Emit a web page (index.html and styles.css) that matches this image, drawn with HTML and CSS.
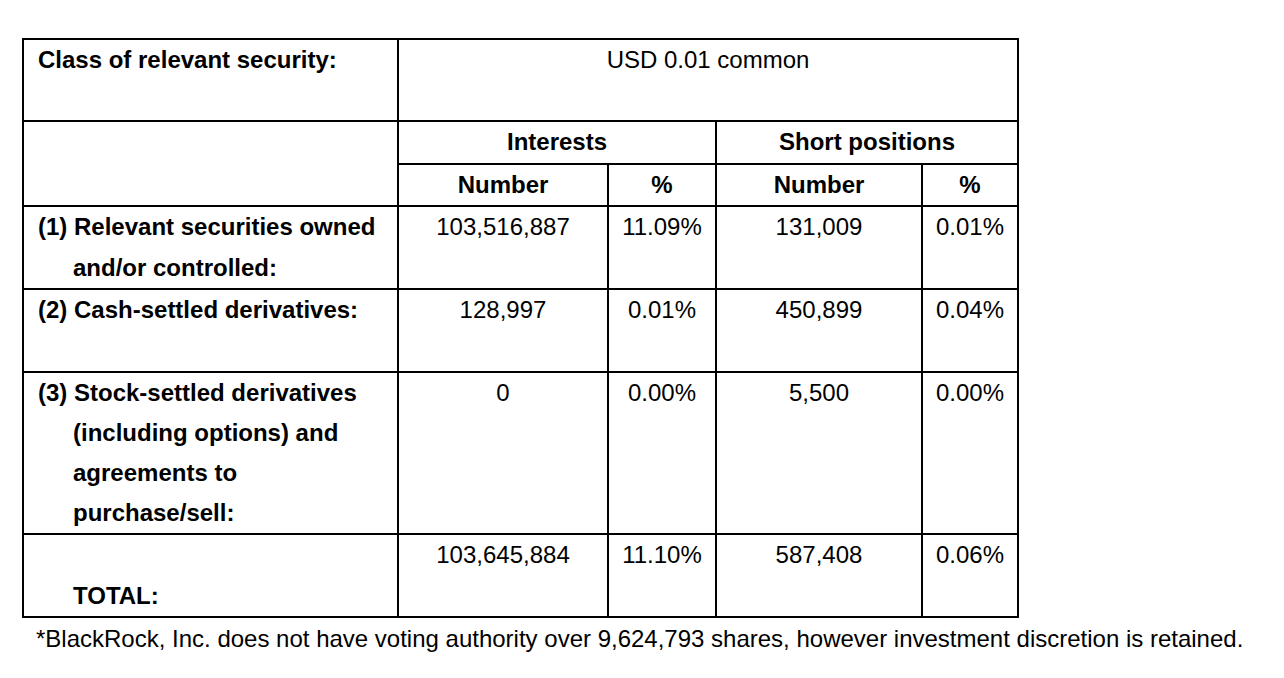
FILE: index.html
```html
<!DOCTYPE html>
<html>
<head>
<meta charset="utf-8">
<link rel="stylesheet" href="styles.css">
</head>
<body>
<table class="disclosure">
  <colgroup>
    <col class="c-label">
    <col class="c-num1">
    <col class="c-pct1">
    <col class="c-num2">
    <col class="c-pct2">
  </colgroup>
  <tr class="r-first">
    <td class="label"><span class="b">Class of relevant security:</span></td>
    <td class="val" colspan="4">USD 0.01 common</td>
  </tr>
  <tr class="r-one">
    <td class="label" rowspan="2"></td>
    <td class="head" colspan="2">Interests</td>
    <td class="head" colspan="2">Short positions</td>
  </tr>
  <tr class="r-one">
    <td class="head">Number</td>
    <td class="head">%</td>
    <td class="head">Number</td>
    <td class="head">%</td>
  </tr>
  <tr class="r-two">
    <td class="label"><div class="hang">(1) Relevant securities owned and/or controlled:</div></td>
    <td class="val">103,516,887</td>
    <td class="val">11.09%</td>
    <td class="val">131,009</td>
    <td class="val">0.01%</td>
  </tr>
  <tr class="r-two">
    <td class="label"><div class="hang">(2) Cash-settled derivatives:</div></td>
    <td class="val">128,997</td>
    <td class="val">0.01%</td>
    <td class="val">450,899</td>
    <td class="val">0.04%</td>
  </tr>
  <tr class="r-four">
    <td class="label"><div class="hang">(3) Stock-settled derivatives (including options) and agreements to purchase/sell:</div></td>
    <td class="val">0</td>
    <td class="val">0.00%</td>
    <td class="val">5,500</td>
    <td class="val">0.00%</td>
  </tr>
  <tr class="r-two">
    <td class="label"><div class="total">TOTAL:</div></td>
    <td class="val">103,645,884</td>
    <td class="val">11.10%</td>
    <td class="val">587,408</td>
    <td class="val">0.06%</td>
  </tr>
</table>
<p class="note">*BlackRock, Inc. does not have voting authority over 9,624,793 shares, however investment discretion is retained.</p>
</body>
</html>
```

FILE: styles.css
```css
html, body {
  margin: 0;
  padding: 0;
  background: #ffffff;
}
body {
  padding: 38px 0 0 22px;
  font-family: "Liberation Sans", Arial, sans-serif;
  font-size: 24px;
  color: #000000;
}
.disclosure {
  border-collapse: collapse;
  table-layout: fixed;
  width: 995px;
  border: 2px solid #000;
}
.c-label { width: 375px; }
.c-num1 { width: 210px; }
.c-pct1 { width: 108px; }
.c-num2 { width: 206px; }
.c-pct2 { width: 96px; }
.disclosure td {
  border: 2px solid #000;
  padding: 0;
  vertical-align: top;
  line-height: 40.5px;
}
.r-first td { height: 80px; }
.r-one td { height: 39px; }
.r-two td { height: 81px; }
.r-four td { line-height: 40px; }
.label {
  font-weight: bold;
  padding-left: 14px !important;
  padding-right: 8px !important;
}
.b { font-weight: bold; }
.hang {
  padding-left: 35px;
  text-indent: -35px;
}
.total {
  padding-left: 35px;
  padding-top: 41px;
  line-height: 40px;
}
.head {
  font-weight: bold;
  text-align: center;
}
.val {
  text-align: center;
}
.note {
  margin: 0;
  padding: 7px 0 0 14px;
  line-height: 28px;
  white-space: nowrap;
}
```
